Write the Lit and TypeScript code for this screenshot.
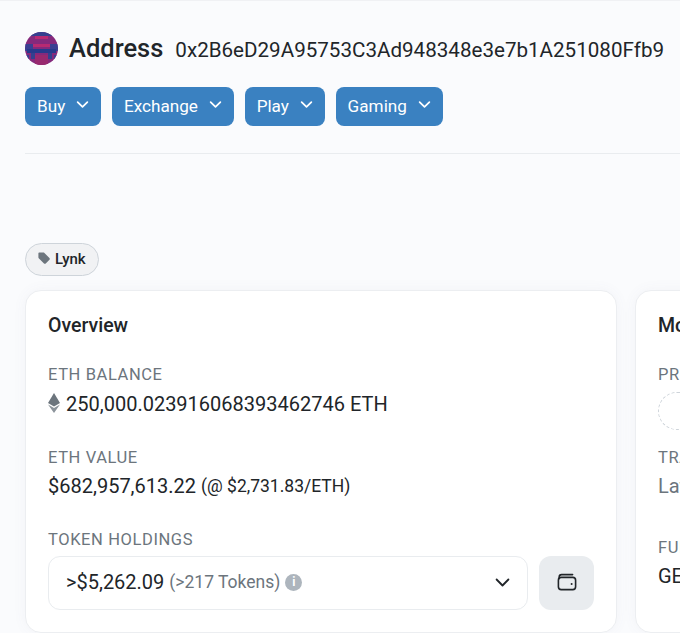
import {css, html, LitElement, TemplateResult} from "lit";
import {customElement} from "lit/decorators.js";

const chevron = html`<svg class="chev" viewBox="0 0 12 12"><path d="M1.5 3.8 6 8.2l4.5-4.4" fill="none" stroke="currentColor" stroke-width="1.6" stroke-linecap="round" stroke-linejoin="round"/></svg>`;

@customElement("app-root")
export class AppRoot extends LitElement {
    private menus: string[] = ["Buy", "Exchange", "Play", "Gaming"];

    protected renderMenu(label: string): TemplateResult {
        return html`<button type="button" class="menu"><span>${label}</span>${chevron}</button>`;
    }

    protected render(): TemplateResult {
        return html`
            <div class="page">
                <div class="head">
                    <svg class="avatar" viewBox="0 0 16 16" shape-rendering="crispEdges">
                        <defs><clipPath id="round"><circle cx="8" cy="8" r="8"/></clipPath></defs>
                        <g clip-path="url(#round)">
                            <rect width="16" height="16" fill="#85297c"/>
                            <rect x="0" y="0" width="16" height="2" fill="#34408f"/>
                            <rect x="5" y="2" width="6" height="1.4" fill="#b82a72"/>
                            <rect x="3" y="5.6" width="10" height="1.6" fill="#b82a72"/>
                            <rect x="0" y="6" width="4" height="3" fill="#3a3f92"/>
                            <rect x="12" y="6" width="4" height="3" fill="#3a3f92"/>
                            <rect x="1" y="8.4" width="14" height="2" fill="#27398c"/>
                            <rect x="3" y="10" width="2" height="3" fill="#34408f"/>
                            <rect x="11" y="10" width="2" height="3" fill="#34408f"/>
                            <rect x="5" y="11" width="6" height="5" fill="#98296f"/>
                            <rect x="0" y="11" width="2" height="5" fill="#3a3f92"/>
                            <rect x="14" y="11" width="2" height="5" fill="#3a3f92"/>
                        </g>
                    </svg>
                    <h1>Address</h1>
                    <span class="hash">0x2B6eD29A95753C3Ad948348e3e7b1A251080Ffb9</span>
                </div>
                <div class="menus">${this.menus.map((m) => this.renderMenu(m))}</div>
                <div class="rule"></div>
                <div class="tag">
                    <svg viewBox="0 0 16 16"><path d="M1.6 2.6A1 1 0 0 1 2.6 1.6h4.6c.4 0 .8.2 1 .4l6 6c.6.6.6 1.5 0 2l-4.2 4.2c-.6.6-1.5.6-2 0l-6-6c-.3-.3-.4-.6-.4-1z" fill="#6c757d"/></svg>
                    <span>Lynk</span>
                </div>
                <div class="cards">
                    <section class="card">
                        <h2>Overview</h2>
                        <div class="label">ETH BALANCE</div>
                        <div class="value first">
                            <svg class="eth" viewBox="0 0 12 20">
                                <path d="M6 0 12 10 6 13.4 0 10z" fill="#6c757d"/>
                                <path d="M6 15 12 11.4 6 20 0 11.4z" fill="#8c949b"/>
                            </svg>
                            <span>250,000.023916068393462746 ETH</span>
                        </div>
                        <div class="label second">ETH VALUE</div>
                        <div class="value"><span>$682,957,613.22</span><small>(@ $2,731.83/ETH)</small></div>
                        <div class="label third">TOKEN HOLDINGS</div>
                        <div class="holdings">
                            <div class="select">
                                <span>&gt;$5,262.09</span>
                                <span class="muted">(&gt;217 Tokens)</span>
                                <span class="info">i</span>
                                <svg class="select-chev" viewBox="0 0 14 14"><path d="M1.5 4.2 7 9.8l5.5-5.6" fill="none" stroke="#212529" stroke-width="1.7" stroke-linecap="round" stroke-linejoin="round"/></svg>
                            </div>
                            <button type="button" class="wallet">
                                <svg viewBox="0 0 20 18" fill="none" stroke="#212529" stroke-width="1.6">
                                    <path d="M2.2 5.4V4a2.4 2.4 0 0 1 2.4-2.4h11" stroke-linecap="round"/>
                                    <rect x="1.4" y="4.4" width="17.2" height="12.2" rx="2.8"/>
                                    <circle cx="14.6" cy="11" r="1" fill="#212529" stroke="none"/>
                                </svg>
                            </button>
                        </div>
                    </section>
                    <section class="card side">
                        <h2>More Info</h2>
                        <div class="label">PRIVATE NAME TAGS</div>
                        <div class="add">+ Add</div>
                        <div class="label tx">TRANSACTIONS SENT</div>
                        <div class="value latest">Latest: 2 hrs ago</div>
                        <div class="label funded">FUNDED BY</div>
                        <div class="value">GENESIS</div>
                    </section>
                </div>
            </div>
        `;
    }

    static styles = css`
        :host {
            display: block;
            width: 680px;
            height: 633px;
            overflow: hidden;
            background: #fafbfd;
            font-family: Roboto, "Liberation Sans", sans-serif;
            color: #212529;
        }

        .page {
            box-sizing: border-box;
            width: 680px;
            height: 633px;
            padding: 31px 0 0 25px;
            border-top: 1px solid #f0f1f4;
            overflow: hidden;
        }

        .head {
            display: flex;
            align-items: baseline;
            height: 32px;
        }

        .avatar {
            align-self: center;
            width: 33px;
            height: 33px;
            flex: none;
        }

        h1 {
            margin: 0 0 0 11px;
            font-size: 25.5px;
            font-weight: 500;
            line-height: 32px;
        }

        .hash {
            margin-left: 12px;
            font-size: 20.6px;
            white-space: nowrap;
        }

        .menus {
            display: flex;
            gap: 10.7px;
            margin-top: 23px;
        }

        .menu {
            display: flex;
            align-items: center;
            gap: 11px;
            height: 39px;
            padding: 0 12px 2px;
            border: none;
            border-radius: 8px;
            background: #3a81c1;
            color: #fff;
            font: 400 17.15px Roboto, sans-serif;
        }

        .chev {
            width: 13px;
            height: 13px;
            margin-top: -2px;
        }

        .rule {
            height: 1px;
            margin-top: 27px;
            background: #e9ecef;
        }

        .tag {
            display: inline-flex;
            align-items: center;
            gap: 4px;
            box-sizing: border-box;
            height: 33px;
            margin-top: 89px;
            padding: 0 12px 2px 11px;
            border: 1px solid #ced4da;
            border-radius: 17px;
            background: #f1f2f4;
            font-size: 15px;
            font-weight: 500;
            color: #212529;
            vertical-align: top;
        }

        .tag svg {
            width: 14px;
            height: 14px;
            margin-top: -2px;
        }

        .cards {
            display: flex;
            gap: 18px;
            margin-top: 14px;
        }

        .card {
            box-sizing: border-box;
            flex: none;
            width: 592px;
            height: 343px;
            padding: 23px 22px 0;
            border: 1px solid #eceef1;
            border-radius: 16px;
            background: #fff;
            box-shadow: 0 0 14px rgba(90, 100, 130, 0.05);
        }

        .card.side {
            width: 400px;
        }

        h2 {
            margin: 0;
            font-size: 19.5px;
            font-weight: 500;
            line-height: 24px;
        }

        .label {
            margin-top: 27px;
            font-size: 16.5px;
            line-height: 20px;
            letter-spacing: 0.6px;
            color: #6c757d;
        }

        .label.second {
            margin-top: 31px;
        }

        .label.third {
            margin-top: 31px;
        }

        .value {
            display: flex;
            align-items: center;
            gap: 5px;
            margin-top: 5px;
            font-size: 20px;
            line-height: 26px;
            white-space: nowrap;
        }

        .value.first {
            gap: 6px;
            margin-top: 6px;
        }

        .value small {
            font-size: 17.5px;
        }

        .eth {
            width: 12px;
            height: 20px;
            margin-top: -2px;
        }

        .holdings {
            display: flex;
            gap: 11px;
            margin-top: 6px;
        }

        .select {
            display: flex;
            flex: 1;
            align-items: center;
            gap: 5px;
            box-sizing: border-box;
            height: 54px;
            padding: 0 17px 2px;
            border: 1px solid #e9ecef;
            border-radius: 12px;
            font-size: 20px;
        }

        .muted {
            font-size: 17.5px;
            color: #6c757d;
        }

        .info {
            display: flex;
            align-items: center;
            justify-content: center;
            width: 17px;
            height: 17px;
            border-radius: 50%;
            background: #adb5bd;
            color: #fff;
            font-size: 12px;
            font-weight: 700;
        }

        .select-chev {
            width: 15px;
            height: 15px;
            margin-left: auto;
        }

        .wallet {
            display: flex;
            align-items: center;
            justify-content: center;
            flex: none;
            width: 55px;
            height: 54px;
            padding: 0 0 2px;
            border: none;
            border-radius: 12px;
            background: #e9ecef;
        }

        .wallet svg {
            width: 20px;
            height: 18px;
        }

        .add {
            box-sizing: border-box;
            width: 90px;
            height: 38px;
            margin-top: 7px;
            padding: 8px 0 0 32px;
            border: 1px dashed #ced4da;
            border-radius: 19px;
            font-size: 14px;
            color: #6c757d;
        }

        .label.tx {
            margin-top: 18px;
        }

        .label.funded {
            margin-top: 39px;
        }

        .latest {
            color: #6c757d;
        }
    `;
}
